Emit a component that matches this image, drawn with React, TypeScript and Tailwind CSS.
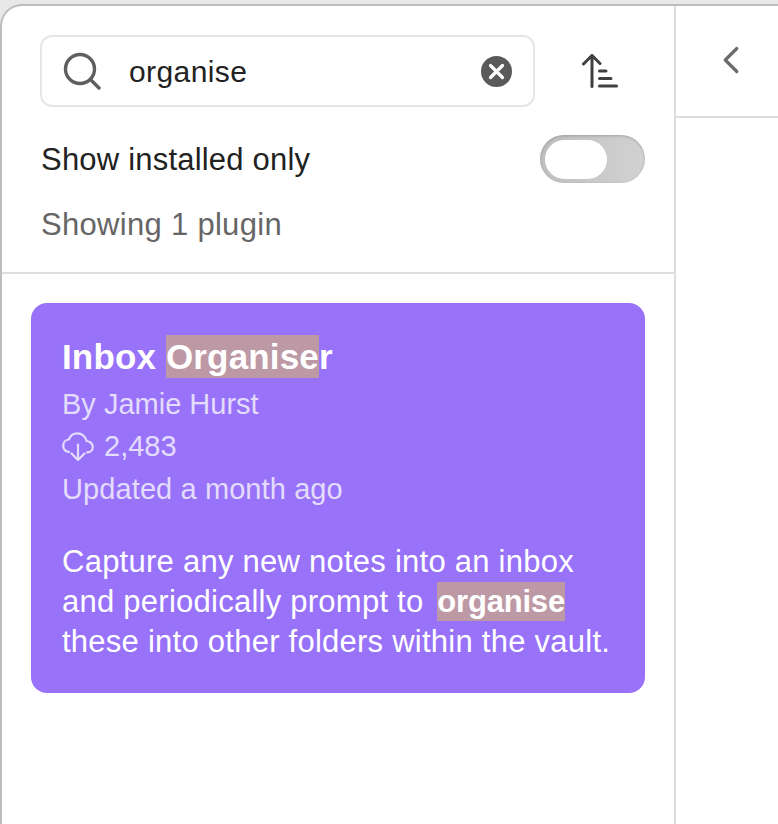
import { ChevronLeft } from 'lucide-react'

const font = { sans: 'font-["Liberation_Sans",Arial,sans-serif]' }

function SearchIcon() {
  return (
    <svg width="38" height="38" viewBox="0 0 38 38" fill="none" stroke="#5f5f5f" strokeWidth="3.4" strokeLinecap="round">
      <circle cx="17" cy="17" r="14.5" />
      <path d="M27.5 27.5 L36 36" />
    </svg>
  )
}

function ClearIcon() {
  return (
    <svg width="31" height="31" viewBox="0 0 31 31" fill="none">
      <circle cx="15.5" cy="15.5" r="15.5" fill="#5a5a5a" />
      <path d="M9.5 9.5 L21.5 21.5 M21.5 9.5 L9.5 21.5" stroke="#fff" strokeWidth="3.2" strokeLinecap="round" />
    </svg>
  )
}

function SortIcon() {
  return (
    <svg width="36" height="34" viewBox="0 0 36 34" fill="none" stroke="#404040" strokeWidth="3" strokeLinecap="round">
      <path d="M10 32.5 V2 M1.5 10 L10 1.5 L18 9.5" />
      <path d="M17.5 17 H24 M17.5 24.5 H29 M17.5 32 H34.5" />
    </svg>
  )
}

function CloudDownloadIcon() {
  return (
    <svg width="32" height="30" viewBox="0 0 32 30" fill="none" stroke="#e4dcfd" strokeWidth="2.2" strokeLinecap="round" strokeLinejoin="round">
      <path d="M7 20 C3.5 19.5 1.2 17 1.2 13.6 C1.2 10.4 3.6 7.8 6.8 7.5 C8.2 3.8 11.6 1.4 15.4 1.4 C20 1.4 23.8 4.6 24.6 9 C28 9.2 30.8 11.8 30.8 15 C30.8 18 28.4 20.4 25.2 20.4" />
      <path d="M16 12.5 V28 M9.5 21.5 L16 28 L22.5 21.5" />
    </svg>
  )
}

export default function App() {
  return (
    <div className={`w-[778px] h-[824px] overflow-hidden bg-[#e8e8e8] pt-[4px] ${font.sans}`}>
      <div className="flex h-[820px] rounded-tl-[22px] border-t-2 border-l-2 border-[#bdbdbd] bg-white">
        {/* List pane */}
        <div className="w-[674px] shrink-0 border-r-2 border-[#dedede]">
          <div className="h-[268px] border-b-2 border-[#dedede] pl-[38px] pr-[29px] pt-[29px]">
            <div className="flex items-center">
              <div className="flex h-[72px] w-[495px] items-center rounded-[12px] border-2 border-[#e6e6e6] pl-[21px] pr-[21px]">
                <SearchIcon />
                <span className="ml-[28px] text-[30px] tracking-[0.4px] text-[#222222]">organise</span>
                <div className="ml-auto"><ClearIcon /></div>
              </div>
              <div className="ml-[47px]"><SortIcon /></div>
            </div>
            <div className="mt-[28px] flex h-[48px] items-center justify-between">
              <span className="ml-px mt-[3px] text-[31px] tracking-[0.2px] text-[#222222]">Show installed only</span>
              <div className="flex h-[48px] w-[105px] items-center rounded-full bg-gradient-to-r from-[#bfbfbf] to-[#d2d2d2] pl-[5px] shadow-[inset_0_1px_3px_rgba(0,0,0,0.2)]">
                <div className="h-[39px] w-[62px] rounded-full bg-white" />
              </div>
            </div>
            <p className="ml-px mt-[19px] text-[31px] tracking-[0.3px] text-[#666666]">Showing 1 plugin</p>
          </div>
          <div className="px-[29px] pt-[29px]">
            <div className="h-[390px] rounded-[16px] bg-[#9872f8] pl-[31px] pr-[28px] pt-[34px]">
              <h3 className="text-[35px] font-bold leading-[40px] tracking-[0.15px] text-white">
                Inbox <span className="bg-[#bd99a5] py-[2px]">Organise</span>r
              </h3>
              <div className="mt-[6px] text-[29px] leading-[42.5px] text-[#e4dcfd]">
                <p>By Jamie Hurst</p>
                <p className="flex h-[42px] items-center gap-[10px]"><CloudDownloadIcon />2,483</p>
                <p className="tracking-[0.1px]">Updated a month ago</p>
              </div>
              <p className="mt-[32px] text-[31px] leading-[40px] tracking-[0.25px] text-white">
                Capture any new notes into an inbox and periodically prompt to <span className="ml-[5px] bg-[#bd99a5] py-[2px] font-bold tracking-[-0.2px]">organise</span> these into other folders within the vault.
              </p>
            </div>
          </div>
        </div>
        {/* Detail pane */}
        <div className="flex-1">
          <div className="flex h-[112px] items-start border-b-2 border-[#dedede] pl-[32px] pt-[31px]">
            <ChevronLeft size={46} strokeWidth={1.7} className="text-[#6b6b6b]" />
          </div>
        </div>
      </div>
    </div>
  )
}
